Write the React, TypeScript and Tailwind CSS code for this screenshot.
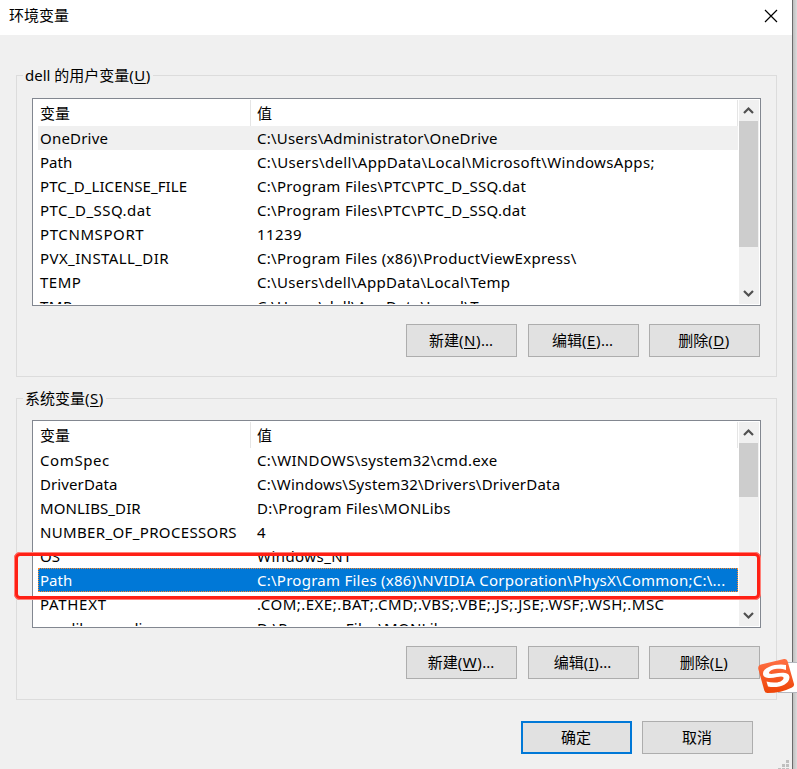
import type { ReactNode } from 'react';
import clsx from 'clsx';

interface Variable {
    name: string;
    value: string;
    nameClass?: string;
    valueClass?: string;
    state?: 'muted' | 'selected';
}

const userVariables: Variable[] = [
    { name: 'OneDrive', value: 'C:\\Users\\Administrator\\OneDrive', nameClass: 'tracking-[0.2px]', valueClass: 'tracking-[0.21px]', state: 'muted' },
    { name: 'Path', value: 'C:\\Users\\dell\\AppData\\Local\\Microsoft\\WindowsApps;', valueClass: 'tracking-[0.36px]' },
    { name: 'PTC_D_LICENSE_FILE', value: 'C:\\Program Files\\PTC\\PTC_D_SSQ.dat', nameClass: 'tracking-[0.1px]', valueClass: 'tracking-[0.3px]' },
    { name: 'PTC_D_SSQ.dat', value: 'C:\\Program Files\\PTC\\PTC_D_SSQ.dat', nameClass: 'tracking-[0.45px]', valueClass: 'tracking-[0.3px]' },
    { name: 'PTCNMSPORT', value: '11239', nameClass: 'tracking-[0.6px]', valueClass: 'tracking-[0.4px]' },
    { name: 'PVX_INSTALL_DIR', value: 'C:\\Program Files (x86)\\ProductViewExpress\\', nameClass: 'tracking-[0.4px]', valueClass: 'tracking-[0.3px]' },
    { name: 'TEMP', value: 'C:\\Users\\dell\\AppData\\Local\\Temp', nameClass: 'tracking-[0.5px]', valueClass: 'tracking-[0.31px]' },
    { name: 'TMP', value: 'C:\\Users\\dell\\AppData\\Local\\Temp', nameClass: 'tracking-[0.5px]', valueClass: 'tracking-[0.31px]' },
];

const systemVariables: Variable[] = [
    { name: 'ComSpec', value: 'C:\\WINDOWS\\system32\\cmd.exe', nameClass: 'tracking-[0.6px]', valueClass: 'tracking-[0.35px]' },
    { name: 'DriverData', value: 'C:\\Windows\\System32\\Drivers\\DriverData', nameClass: 'tracking-[0.1px]', valueClass: 'tracking-[0.22px]' },
    { name: 'MONLIBS_DIR', value: 'D:\\Program Files\\MONLibs', nameClass: 'tracking-[0.1px]', valueClass: 'tracking-[0.25px]' },
    { name: 'NUMBER_OF_PROCESSORS', value: '4', nameClass: 'tracking-[0.35px]' },
    { name: 'OS', value: 'Windows_NT', valueClass: 'tracking-[0.45px]' },
    { name: 'Path', value: 'C:\\Program Files (x86)\\NVIDIA Corporation\\PhysX\\Common;C:\\...', valueClass: 'tracking-[0.26px]', state: 'selected' },
    { name: 'PATHEXT', value: '.COM;.EXE;.BAT;.CMD;.VBS;.VBE;.JS;.JSE;.WSF;.WSH;.MSC', nameClass: 'tracking-[0.7px]', valueClass: 'tracking-[0.49px]' },
    { name: 'use_lib_encoding', value: 'D:\\Program Files\\MONLibs', valueClass: 'tracking-[0.25px]' },
];

function Hotkey({ children }: { children: ReactNode }) {
    return (
        <span className="tracking-[0.5px]">
            (<span className="underline underline-offset-2">{children}</span>)
        </span>
    );
}

function Button({ label, hotkey, suffix = '', primary }: { label: string; hotkey?: string; suffix?: string; primary?: boolean }) {
    return (
        <button
            className={clsx(
                'flex h-[33px] w-[111px] shrink-0 items-center justify-center pr-px leading-none bg-[#e1e1e1]',
                primary ? 'border-2 border-[#0078d7]' : 'border border-[#adadad]'
            )}
        >
            <span>
                {label}
                {hotkey && <Hotkey>{hotkey}</Hotkey>}
                {suffix}
            </span>
        </button>
    );
}

function Chevron({ down }: { down?: boolean }) {
    return (
        <svg width="20" height="21" viewBox="0 0 20 21" fill="none" stroke="#505050" strokeWidth="2.2" className="shrink-0">
            <path d={down ? 'M5 8 L9.5 12.5 L14 8' : 'M5 13 L9.5 8.5 L14 13'} />
        </svg>
    );
}

function VariableList({ rows, thumbClass }: { rows: Variable[]; thumbClass: string }) {
    return (
        <div className="flex h-[208px] w-[729px] border border-[#828790] bg-white p-px">
            <div className="w-[705px] overflow-hidden pl-1">
                <div className="flex h-[26px] w-[700px] border-r border-[#e5e5e5] leading-[26px]">
                    <div className="w-[213px] border-r border-[#e5e5e5] pl-0.5">变量</div>
                    <div className="pl-1.5">值</div>
                </div>
                {rows.map((row) => (
                    <div
                        key={row.name}
                        className={clsx(
                            'flex h-6 w-[700px] whitespace-nowrap leading-6',
                            row.state === 'muted' && 'bg-[#f0f0f0]',
                            row.state === 'selected' && 'bg-[#0078d7] text-white outline-1 -outline-offset-1 outline-dotted outline-[#ff8728]'
                        )}
                    >
                        <div className="w-[219px] shrink-0 pl-0.5">
                            <span className={row.nameClass}>{row.name}</span>
                        </div>
                        <div>
                            <span className={row.valueClass}>{row.value}</span>
                        </div>
                    </div>
                ))}
            </div>
            <div className="flex w-5 flex-col bg-[#f0f0f0]">
                <Chevron />
                <div className={clsx('w-[19px] bg-[#cdcdcd]', thumbClass)} />
                <div className="mt-auto flex">
                    <Chevron down />
                </div>
            </div>
        </div>
    );
}

function Group({ label, hotkey, className, children }: { label: string; hotkey: string; className: string; children: ReactNode }) {
    return (
        <section className={clsx('relative h-[302px] w-[761px] border border-[#dcdcdc] pl-[15px]', className)}>
            <h2 className="absolute -top-[13px] left-[6px] bg-[#f0f0f0] px-0.5 leading-6">
                {label}
                <Hotkey>{hotkey}</Hotkey>
            </h2>
            {children}
        </section>
    );
}

function SogouLogo() {
    return (
        <svg width="38" height="38" viewBox="0 0 38 38" className="absolute left-[758px] top-[657px]">
            <defs>
                <linearGradient id="sogou" x1="0" y1="0" x2="0" y2="1">
                    <stop offset="0" stopColor="#ff7045" />
                    <stop offset="1" stopColor="#ee4508" />
                </linearGradient>
            </defs>
            <path d="M3 7.5 L26 2 Q28.500 1.500 29.500 4 L36 27 Q36.500 29.500 34 30.500 Q23 36 9.500 36 Q7 36 6.300 33.500 L0.300 12 Q-0.200 8.300 3 7.500Z" fill="url(#sogou)" />
            <path
                d="M28 8 C20 6 5 9.500 5 16.500 C5 22 13 21.500 19 20 C24 18.800 26 19.500 25.500 21.500 C24 26 15 26.500 8.500 24.500 L10 29.500 C19 31.500 31 28.500 31.500 20.500 C31.500 14.500 23 15.500 17 16.500 C13 17.300 10.500 17 11 15.500 C12.500 11.500 22 10.500 28 13 Z"
                fill="white"
            />
        </svg>
    );
}

export default function App() {
    return (
        <div className="relative flex h-[769px] w-[797px] overflow-hidden bg-[#f0f0f0] font-['Noto_Sans','Noto_Sans_CJK_SC',sans-serif] text-[15px] text-black">
            <div className="w-[792px] shrink-0">
                <header className="flex h-[35px] items-center justify-between bg-white pl-[9px] pr-[14px]">
                    <h1 className="-mt-1 leading-none">环境变量</h1>
                    <svg width="14" height="14" viewBox="0 0 14 14" stroke="black" strokeWidth="1.2" className="-mt-[3px]">
                        <path d="M1 1 L13 13 M13 1 L1 13" />
                    </svg>
                </header>

                <main className="pl-4 pt-10">
                    <Group label="dell 的用户变量" hotkey="U" className="pt-[22px]">
                        <VariableList rows={userVariables} thumbClass="h-[126px]" />
                        <div className="mt-[18px] flex w-[728px] justify-end gap-[10.5px]">
                            <Button label="新建" hotkey="N" suffix="..." />
                            <Button label="编辑" hotkey="E" suffix="..." />
                            <Button label="删除" hotkey="D" />
                        </div>
                    </Group>
                    <div className="h-[21px]" />
                    <Group label="系统变量" hotkey="S" className="pt-[21px]">
                        <VariableList rows={systemVariables} thumbClass="h-[54px]" />
                        <div className="mt-[18px] flex w-[728px] justify-end gap-[10.5px]">
                            <Button label="新建" hotkey="W" suffix="..." />
                            <Button label="编辑" hotkey="I" suffix="..." />
                            <Button label="删除" hotkey="L" />
                        </div>
                    </Group>
                    <div className="mt-[21px] flex w-[737px] justify-end gap-2.5">
                        <Button label="确定" primary />
                        <Button label="取消" />
                    </div>
                </main>
            </div>
            <div className="w-px bg-[#6b6b6b]" />
            <div className="w-1 bg-gradient-to-r from-[#bebebe] to-[#dcdcdc]" />

            {/* Resize grip */}
            <svg width="12" height="12" viewBox="0 0 12 12" fill="#bfbfbf" className="absolute left-[778px] top-[760px]">
                <path d="M8 0h3v3h-3z M4 4h3v3h-3z M8 4h3v3h-3z M0 8h3v3h-3z M4 8h3v3h-3z M8 8h3v3h-3z" />
            </svg>

            {/* Highlight around the selected row */}
            <div className="absolute left-[14px] top-[552px] h-[48px] w-[747px] rounded-md border-4 border-[#ff2015] outline-1 -outline-offset-1 outline-[#ff8078]" />

            {/* Input method bar */}
            <div className="absolute left-[778px] top-[662px] h-[31px] w-[19px] border-y border-[#b4b8bf] bg-white" />
            <SogouLogo />
        </div>
    );
}
